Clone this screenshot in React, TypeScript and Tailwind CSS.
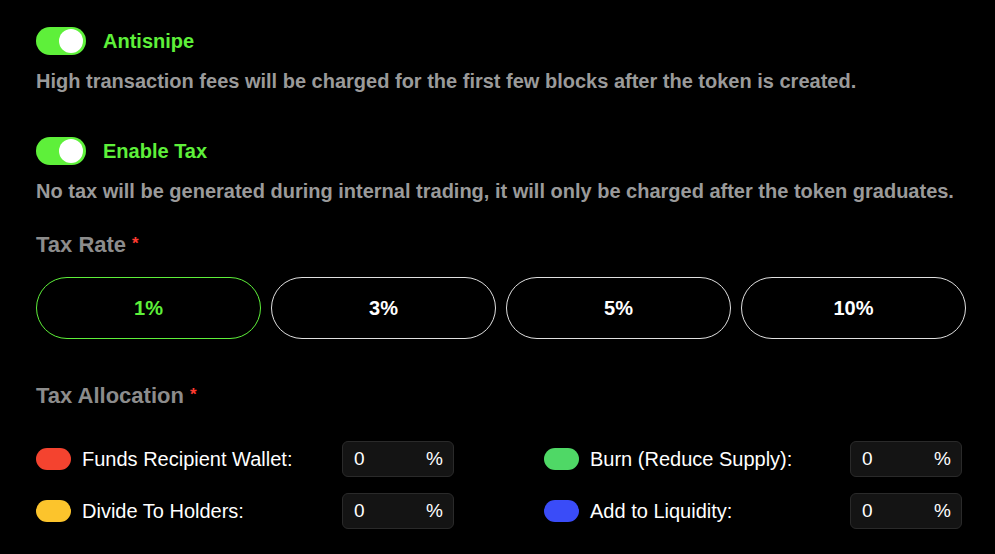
import { useState } from 'react';

function Toggle({ on }: { on: boolean }) {
  return (
    <div className={`relative h-[28px] w-[50px] rounded-full ${on ? 'bg-[#5ef03a]' : 'bg-[#444]'}`}>
      <div className="absolute right-[3px] top-[2px] h-[24px] w-[24px] rounded-full bg-white" />
    </div>
  );
}

function Title({ text }: { text: string }) {
  return (
    <div className="flex h-[28px] items-center text-[22px] font-bold text-[#8c8c8c]">
      {text}
      <span className="ml-[6px] text-[17px] text-[#ff3b30]">*</span>
    </div>
  );
}

function AllocRow({ color, label }: { color: string; label: string }) {
  return (
    <div className="flex h-[36px] items-center">
      <div className={`h-[22px] w-[35px] rounded-full ${color}`} />
      <div className="ml-[11px] w-[260px] text-[20px] text-white">{label}</div>
      <div className="flex h-[36px] w-[112px] items-center justify-between rounded-md border border-[#2a2a2a] bg-[#141414] pl-[11px] pr-[10px] text-[19px] text-white">
        <span>0</span>
        <span>%</span>
      </div>
    </div>
  );
}

export default function App() {
  const [rate, setRate] = useState('1%');
  const rates = ['1%', '3%', '5%', '10%'];

  return (
    <div className="min-h-screen bg-black px-[36px] pt-[27px] font-['Liberation_Sans',Arial,sans-serif]">
      <div className="flex h-[28px] items-center gap-[17px]">
        <Toggle on />
        <span className="text-[20px] font-bold leading-[28px] text-[#5ef03a]">Antisnipe</span>
      </div>
      <p className="mt-[14px] h-[24px] text-[20px] font-bold leading-[24px] text-[#9a9a9a]">
        High transaction fees will be charged for the first few blocks after the token is created.
      </p>

      <div className="mt-[44px] flex h-[28px] items-center gap-[17px]">
        <Toggle on />
        <span className="text-[20px] font-bold leading-[28px] text-[#5ef03a]">Enable Tax</span>
      </div>
      <p className="mt-[14px] h-[24px] text-[20px] font-bold leading-[24px] text-[#9a9a9a]">
        No tax will be generated during internal trading, it will only be charged after the token graduates.
      </p>

      <div className="mt-[27px]">
        <Title text="Tax Rate" />
      </div>
      <div className="mt-[19px] grid w-[930px] grid-cols-4 gap-[10px]">
        {rates.map((r) => (
          <button
            key={r}
            onClick={() => setRate(r)}
            className={`h-[62px] rounded-full border text-[20px] font-bold ${
              rate === r ? 'border-[#5ef03a] text-[#5ef03a]' : 'border-[#e0e0e0] text-white'
            }`}
          >
            {r}
          </button>
        ))}
      </div>

      <div className="mt-[42px]">
        <Title text="Tax Allocation" />
      </div>
      <div className="mt-[32px] grid grid-cols-[418px_418px] gap-x-[90px] gap-y-[16px]">
        <AllocRow color="bg-[#f4432f]" label="Funds Recipient Wallet:" />
        <AllocRow color="bg-[#4fd866]" label="Burn (Reduce Supply):" />
        <AllocRow color="bg-[#fcc42c]" label="Divide To Holders:" />
        <AllocRow color="bg-[#3a4cf8]" label="Add to Liquidity:" />
      </div>
    </div>
  );
}
